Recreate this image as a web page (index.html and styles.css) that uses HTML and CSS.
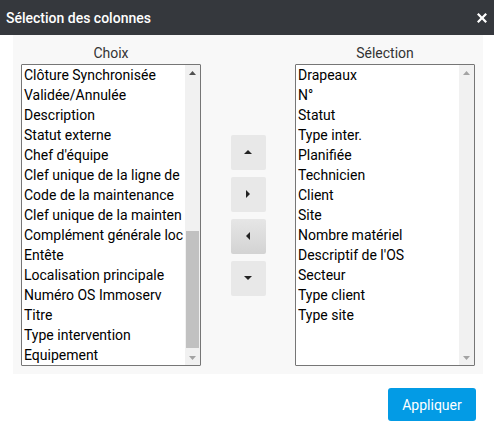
FILE: index.html
```html
<!DOCTYPE html>
<html lang="fr">
<head>
<meta charset="utf-8">
<title>Sélection des colonnes</title>
<link rel="stylesheet" href="styles.css">
</head>
<body>
<div class="dialog">
  <div class="header">
    <span class="title">Sélection des colonnes</span>
    <svg class="close" viewBox="0 0 10 10" width="10" height="10" aria-hidden="true"><path d="M1.6 0 L5 3.4 L8.4 0 L10 1.6 L6.6 5 L10 8.4 L8.4 10 L5 6.6 L1.6 10 L0 8.4 L3.4 5 L0 1.6 Z" fill="#fff"/></svg>
  </div>
  <div class="panel">
    <div class="column">
      <div class="label">Choix</div>
      <div class="list">
        <div class="items">
          <div class="item">Clôture Synchronisée</div>
          <div class="item">Validée/Annulée</div>
          <div class="item">Description</div>
          <div class="item">Statut externe</div>
          <div class="item">Chef d'équipe</div>
          <div class="item">Clef unique de la ligne de</div>
          <div class="item">Code de la maintenance</div>
          <div class="item">Clef unique de la mainten</div>
          <div class="item">Complément générale loc</div>
          <div class="item">Entête</div>
          <div class="item">Localisation principale</div>
          <div class="item">Numéro OS Immoserv</div>
          <div class="item">Titre</div>
          <div class="item">Type intervention</div>
          <div class="item">Equipement</div>
        </div>
        <div class="scrollbar">
          <div class="sb-btn"><svg viewBox="0 0 7 4" width="7" height="4"><path d="M0 4 L3.5 0 L7 4 Z" fill="#505050"/></svg></div>
          <div class="sb-track"><div class="sb-thumb"></div></div>
          <div class="sb-btn"><svg viewBox="0 0 7 4" width="7" height="4"><path d="M0 0 L3.5 4 L7 0 Z" fill="#a3a3a3"/></svg></div>
        </div>
      </div>
    </div>
    <div class="controls">
      <button class="move"><svg viewBox="0 0 8 8" width="8" height="8"><path d="M0 6 L4 2 L8 6 Z" fill="#222"/></svg></button>
      <button class="move"><svg viewBox="0 0 8 8" width="8" height="8"><path d="M2 0 L6 4 L2 8 Z" fill="#222"/></svg></button>
      <button class="move move-active"><svg viewBox="0 0 8 8" width="8" height="8"><path d="M6 0 L2 4 L6 8 Z" fill="#222"/></svg></button>
      <button class="move"><svg viewBox="0 0 8 8" width="8" height="8"><path d="M0 2 L4 6 L8 2 Z" fill="#222"/></svg></button>
    </div>
    <div class="column">
      <div class="label">Sélection</div>
      <div class="list">
        <div class="items">
          <div class="item">Drapeaux</div>
          <div class="item">N°</div>
          <div class="item">Statut</div>
          <div class="item">Type inter.</div>
          <div class="item">Planifiée</div>
          <div class="item">Technicien</div>
          <div class="item">Client</div>
          <div class="item">Site</div>
          <div class="item">Nombre matériel</div>
          <div class="item">Descriptif de l'OS</div>
          <div class="item">Secteur</div>
          <div class="item">Type client</div>
          <div class="item">Type site</div>
        </div>
        <div class="scrollbar">
          <div class="sb-btn"><svg viewBox="0 0 7 4" width="7" height="4"><path d="M0 4 L3.5 0 L7 4 Z" fill="#a3a3a3"/></svg></div>
          <div class="sb-track"></div>
          <div class="sb-btn"><svg viewBox="0 0 7 4" width="7" height="4"><path d="M0 0 L3.5 4 L7 0 Z" fill="#a3a3a3"/></svg></div>
        </div>
      </div>
    </div>
  </div>
  <div class="footer">
    <button class="apply">Appliquer</button>
  </div>
</div>
</body>
</html>
```
FILE: styles.css
```css
html, body {
  margin: 0;
  padding: 0;
  background: #ffffff;
}
body {
  font-family: Roboto, "Liberation Sans", Arial, sans-serif;
  font-size: 14px;
  color: #111;
}
.header {
  height: 35px;
  background: #35383d;
  display: flex;
  align-items: center;
  justify-content: space-between;
  padding: 0 7px 0 6px;
}
.title {
  color: #fff;
  font-size: 14px;
  font-weight: 500;
}
.close {
  display: block;
}
.panel {
  margin: 0 11px 0 13px;
  background: #f8f8f8;
  padding: 8px;
  display: grid;
  grid-template-columns: 180px 1fr 180px;
}
.column {
  display: flex;
  flex-direction: column;
}
.label {
  text-align: center;
  line-height: 21px;
  color: #333;
}
.list {
  height: 302px;
  box-sizing: border-box;
  border: 1px solid #767676;
  border-radius: 1px;
  background: #fff;
  display: flex;
  overflow: hidden;
}
.items {
  flex: 1;
  min-width: 0;
  overflow: hidden;
}
.item {
  line-height: 20px;
  height: 20px;
  padding: 0 0 0 2px;
  white-space: nowrap;
  color: #000;
}
.scrollbar {
  flex: none;
  width: 15px;
  background: #f1f1f1;
  display: flex;
  flex-direction: column;
}
.sb-btn {
  flex: none;
  height: 15px;
  display: flex;
  align-items: center;
  justify-content: center;
}
.sb-btn svg {
  display: block;
}
.sb-track {
  flex: 1;
  display: flex;
  flex-direction: column;
  justify-content: flex-end;
  padding: 0 1px 2px 0;
}
.sb-thumb {
  height: 117px;
  margin-left: 1px;
  background: #c1c1c1;
}
.controls {
  display: flex;
  flex-direction: column;
  align-items: center;
  justify-content: center;
  gap: 7px;
  padding-top: 21px;
}
.move {
  width: 35px;
  height: 35px;
  border: none;
  border-radius: 2px;
  background: #e8e8e8;
  display: flex;
  align-items: center;
  justify-content: center;
  padding: 0;
}
.move svg {
  display: block;
}
.move-active {
  background: linear-gradient(#e6e6e6, #d3d3d3);
}
.footer {
  display: flex;
  justify-content: flex-end;
  padding: 14px 18px 0 0;
}
.apply {
  width: 88px;
  height: 33px;
  border: none;
  border-radius: 3px;
  background: #039be5;
  color: #fff;
  font-family: Roboto, "Liberation Sans", Arial, sans-serif;
  font-size: 14px;
  padding: 0;
}
```
